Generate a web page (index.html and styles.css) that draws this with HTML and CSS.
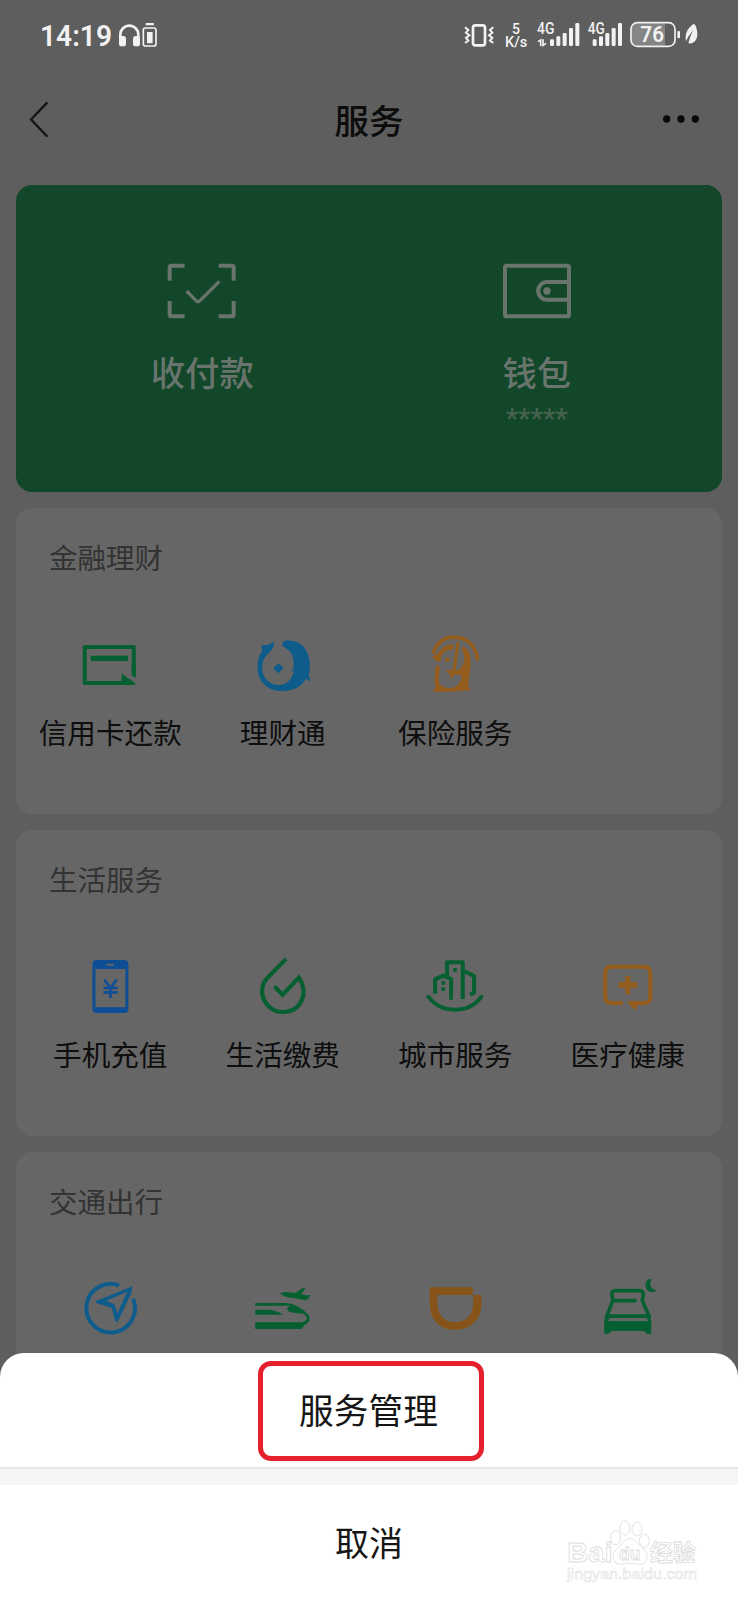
FILE: index.html
```html
<!DOCTYPE html>
<html lang="zh-CN">
<head>
<meta charset="utf-8">
<title>服务</title>
<link rel="stylesheet" href="styles.css">
</head>
<body>
<div class="phone">
  <div class="statusbar">
    <svg class="status-left" viewBox="0 0 540 210" width="180" height="70">
      <text class="clock" x="120" y="138" textLength="216" lengthAdjust="spacingAndGlyphs">14:19</text>
      <path d="M361 118V104a27 27 0 0 1 54 0V118" fill="none" stroke="#f2f2f2" stroke-width="8"/>
      <rect x="357" y="108" width="21" height="31" rx="8"/><rect x="399" y="108" width="21" height="31" rx="8"/>
      <rect x="437" y="69" width="25" height="7" rx="2"/>
      <rect x="430" y="84" width="38" height="54" rx="6" fill="none" stroke="#f2f2f2" stroke-width="5"/>
      <rect x="441" y="96" width="17" height="34" rx="1"/>
    </svg>
    <svg class="status-right" viewBox="0 0 894 210" width="298" height="70">
      <rect x="99" y="76" width="36" height="60" rx="7" fill="none" stroke="#f2f2f2" stroke-width="8"/>
      <path d="M75 82l10 8-7 8 10 8-10 8 7 8-10 7M160 82l-10 8 7 8-10 8 10 8-7 8 10 7" fill="none" stroke="#f2f2f2" stroke-width="6"/>
      <text x="216" y="101" font-size="45" font-weight="500" textLength="24" lengthAdjust="spacingAndGlyphs">5</text>
      <text x="195" y="140" font-size="46" font-weight="500" textLength="67" lengthAdjust="spacingAndGlyphs">K/s</text>
      <text x="291" y="103" font-size="48" font-weight="500" textLength="52" lengthAdjust="spacingAndGlyphs">4G</text>
      <path d="M294 125l8-5v18M309 118v18l9-6" fill="none" stroke="#f2f2f2" stroke-width="5"/>
      <rect x="330" y="118" width="12" height="20" rx="4"/><rect x="349" y="109" width="12" height="29" rx="4"/><rect x="368" y="99" width="12" height="39" rx="4"/><rect x="387" y="84" width="12" height="54" rx="4"/><rect x="406" y="69" width="12" height="69" rx="4"/>
      <text x="443" y="103" font-size="48" font-weight="500" textLength="51" lengthAdjust="spacingAndGlyphs">4G</text>
      <rect x="458" y="118" width="12" height="20" rx="4"/><rect x="477" y="109" width="12" height="29" rx="4"/><rect x="496" y="99" width="12" height="39" rx="4"/><rect x="515" y="84" width="12" height="54" rx="4"/><rect x="534" y="69" width="12" height="69" rx="4"/>
      <path d="M592 70H675V137H592a18 18 0 0 1-18-18V88a18 18 0 0 1 18-18z" fill="#858585"/>
      <rect x="573" y="68" width="132" height="71" rx="19" fill="none" stroke="#f2f2f2" stroke-width="5"/>
      <text x="601" y="126" font-size="64" font-weight="600" textLength="71" lengthAdjust="spacingAndGlyphs">76</text>
      <rect x="712" y="93" width="8" height="22" rx="3"/>
      <path d="M759 73C742 86 734 101 738 124Q744 108 760 90Q750 107 745 130C762 133 772 119 772 102Q771 83 764 73z"/>
    </svg>
  </div>

  <div class="navbar">
    <svg class="back" viewBox="0 0 60 110" width="20" height="37"><path d="M53 6L6 55L53 104" fill="none" stroke="#161616" stroke-width="7.5" stroke-linecap="round" stroke-linejoin="round"/></svg>
    <h1>服务</h1>
    <svg class="more" viewBox="0 0 108 24" width="36" height="8"><circle cx="11" cy="12" r="11"/><circle cx="54" cy="12" r="11"/><circle cx="97" cy="12" r="11"/></svg>
  </div>

  <div class="cards">
    <div class="pay">
      <div class="pay-item">
        <svg viewBox="112 70 210 168" width="70" height="56" fill="none" stroke="#69746d" stroke-width="12">
          <path d="M165 78H125Q120 78 120 83V123M267 78H307Q312 78 312 83V123M165 230H125Q120 230 120 225V184M267 230H307Q312 230 312 225V184"/>
          <path d="M171 154L199 183Q205 189 211 183L269 125" stroke-width="10"/>
        </svg>
        <div class="pay-name">收付款</div>
      </div>
      <div class="pay-item">
        <svg viewBox="183 70 210 168" width="70" height="56" fill="none" stroke="#69746d" stroke-width="12">
          <rect x="192" y="78" width="192" height="152" rx="5"/>
          <path d="M380 127H318a26.500 26.500 0 0 0 0 53H380"/><circle cx="318" cy="154" r="11" fill="#69746d" stroke="none"/>
        </svg>
        <div class="pay-name">钱包</div>
        <div class="pay-balance">*****</div>
      </div>
    </div>

    <section class="card">
      <h2>金融理财</h2>
      <div class="grid">
        <div class="cell">
          <svg class="icon green" viewBox="240.750 105 180 180">
            <path d="M402 227V141H255V249H366" fill="none" stroke="currentColor" stroke-width="12" stroke-linejoin="round"/>
            <path d="M273 167H385V183H273zM366 221L407 250Q406 255 400 255H364zM396 180H408V235L396 226z"/>
          </svg>
          <span>信用卡还款</span>
        </div>
        <div class="cell">
          <svg class="icon azure" viewBox="758.250 105 180 180">
            <path d="M821 124Q807 137 788 136L783 134Q785 145 785 154C771 172 769 209 776 229C789 263 818 275 853 273C884 271 905 258 916 237Q924 239 930 244Q930 233 925 225C931 203 931 181 920 156C906 127 881 119 855 122Q844 126 847 138C857 145 873 153 877 169Q882 184 880 201L874 215L881 212C879 233 862 252 839 255C809 257 787 235 786 207C785 181 795 168 807 158C819 147 821 139 821 124z"/>
            <path d="M834 190L850 205L834 220L819 205z"/>
          </svg>
          <span>理财通</span>
        </div>
        <div class="cell">
          <svg class="icon orange" viewBox="255.750 105 180 180">
            <path d="M281 156C297 121 323 109 345 112C383 111 408 139 413 177" fill="none" stroke="currentColor" stroke-width="11" stroke-linecap="round"/>
            <path d="M277 170Q288 163 296 158C307 142 323 132 341 133L340 149C324 145 309 158 304 171L302 186Q288 184 277 170zM371 139C386 148 393 164 393 183C392 211 386 235 386 258Q389 265 394 270Q340 276 280 276Q283 268 287 263L284 242L287 202Q294 190 300 199L297 244C302 262 321 266 337 263C351 261 358 252 364 239L365 223C356 227 347 225 344 223L335 237L329 221L317 212L333 211L344 205L342 211C355 215 371 200 374 181C375 163 369 155 365 146z"/>
            <path d="M355 125L343 210" stroke="currentColor" stroke-width="9"/><circle cx="323" cy="179" r="7"/>
          </svg>
          <span>保险服务</span>
        </div>
      </div>
    </section>

    <section class="card">
      <h2>生活服务</h2>
      <div class="grid">
        <div class="cell">
          <svg class="icon blue" viewBox="240.750 81 180 180">
            <path fill-rule="evenodd" d="M290 90H374Q386 90 386 102V238Q386 249 374 249H290Q278 249 278 238V102Q278 90 290 90zM287 117V232H377V117zM323 101a3 3 0 0 0 0 6h17a3 3 0 0 0 0-6z"/>
            <path d="M314 149L332 174L351 149M332 174V204M311 174H354M311 187H354" fill="none" stroke="currentColor" stroke-width="8"/>
          </svg>
          <span>手机充值</span>
        </div>
        <div class="cell">
          <svg class="icon green" viewBox="758.250 81 180 180">
            <path d="M853 91L802 143C765 181 794 246 849 246C900 246 928 192 896 143L847 194L827 174" fill="none" stroke="currentColor" stroke-width="12.500" stroke-linecap="square" stroke-linejoin="miter"/>
          </svg>
          <span>生活缴费</span>
        </div>
        <div class="cell">
          <svg class="icon green" viewBox="168.750 81 180 180">
            <path d="M179 200C217 252 301 252 338 200M235 145V97H282V207M247 209V147L223 137L199 148V191M286 123L316 138V188L304 194" fill="none" stroke="currentColor" stroke-width="12" stroke-linecap="butt" stroke-linejoin="round"/>
            <path d="M253 114H264V125H253zM218 153H229V164H218zM218 172H229V183H218z"/><circle cx="179" cy="200" r="6"/><circle cx="338" cy="200" r="6"/>
          </svg>
          <span>城市服务</span>
        </div>
        <div class="cell">
          <svg class="icon orange" viewBox="686.250 81 180 180">
            <path d="M761 219H727Q708 219 708 201V129Q708 110 727 110H824Q843 110 843 129V201Q843 219 824 219H785" fill="none" stroke="currentColor" stroke-width="12"/>
            <path d="M768 138H783V157H804V173H783V193H768V173H748V157H768zM774 213H809L801 240Q785 235 774 213z"/>
          </svg>
          <span>医疗健康</span>
        </div>
      </div>
    </section>

    <section class="card">
      <h2>交通出行</h2>
      <div class="grid">
        <div class="cell">
          <svg class="icon azure" viewBox="240.750 87 180 180">
            <path d="M358 106A73 73 0 1 0 400 146" fill="none" stroke="currentColor" stroke-width="12"/>
            <path fill-rule="evenodd" d="M398 109L395 128L354 215L346 214L336 174L289 159V153zM382 125L319 153L344 163L353 190z"/>
          </svg>
        </div>
        <div class="cell">
          <svg class="icon green" viewBox="758.250 87 180 180">
            <path fill-rule="evenodd" d="M765 159H857C885 161 911 178 926 197Q934 216 913 225L904 237H765V217H902Q920 214 920 203L911 191Q888 191 867 185L860 178Q861 171 869 167H765zM765 179H808Q835 183 848 194H765z"/>
            <path d="M840 131L850 126L865 127L885 129L907 114L916 115L903 133L922 136L931 135Q924 149 915 151L880 144Q853 141 840 131z"/>
          </svg>
        </div>
        <div class="cell">
          <svg class="icon orange deep" viewBox="168.750 87 180 180">
            <path d="M183 112H312V135H206V161C206 193 227 217 258 217C291 217 313 194 313 161V135H338V161C338 209 306 239 258 239C211 239 183 207 183 161z"/>
          </svg>
        </div>
        <div class="cell">
          <svg class="icon green" viewBox="686.250 87 180 180">
            <path d="M710 205L731 151L728 137Q726 122 739 122H811Q823 122 822 137L819 151L842 205M730 152H802" fill="none" stroke="currentColor" stroke-width="11" stroke-linejoin="round"/>
            <path fill-rule="evenodd" d="M715 193H837L846 211V252H834L824 243H726L717 252H705V211zM722 204L715 213H838L832 204zM847 84C824 88 823 117 841 125Q857 128 864 120C846 121 838 106 847 84z"/>
          </svg>
        </div>
      </div>
    </section>
  </div>

  <div class="sheet">
    <div class="action"><span class="highlight">服务管理</span></div>
    <div class="gap"></div>
    <div class="action cancel">取消</div>
    <svg class="watermark" viewBox="0 0 420 204" width="140" height="68">
      <g fill="#fff" stroke="#dcdcdc" stroke-width="2.500">
        <text class="brand" x="4" y="130" font-size="85" textLength="136" lengthAdjust="spacingAndGlyphs">Bai</text>
        <path d="M192 59C208 59 215 75 229 86C244 98 249 119 236 131C223 142 212 132 192 133C172 132 161 141 149 131C136 119 140 99 155 87C169 75 176 59 192 59z"/>
        <ellipse cx="149" cy="56" rx="15" ry="21"/><ellipse cx="177" cy="27" rx="15" ry="21"/><ellipse cx="213" cy="30" rx="15" ry="21"/><ellipse cx="235" cy="65" rx="15" ry="20"/>
        <text class="brand" x="159" y="122" font-size="54" textLength="64" lengthAdjust="spacingAndGlyphs">du</text>
        <text class="brand" x="252" y="126" font-size="68" textLength="137" lengthAdjust="spacingAndGlyphs">经验</text>
        <text class="brand thin" x="3" y="181" font-size="46" textLength="390" lengthAdjust="spacingAndGlyphs">jingyan.baidu.com</text>
      </g>
    </svg>
  </div>
</div>
</body>
</html>
```

FILE: styles.css
```css
* {
  box-sizing: border-box;
}

body {
  margin: 0;
  font-family: "Noto Sans CJK SC", sans-serif;
}

h1,
h2 {
  margin: 0;
}

.phone {
  position: relative;
  width: 738px;
  height: 1600px;
  overflow: hidden;
  background: #5e5e5e;
}

.statusbar {
  display: flex;
  justify-content: space-between;
  height: 70px;
  fill: #f2f2f2;
  font-family: Roboto, sans-serif;
}

.clock {
  font-size: 89px;
  font-weight: 600;
}

.navbar {
  display: flex;
  align-items: center;
  justify-content: space-between;
  height: 98px;
  padding: 0 39px 0 29px;
}

.navbar h1 {
  padding-left: 26px;
  font-size: 34.5px;
  font-weight: 500;
  line-height: 48px;
  color: #0c0c0c;
}

.more {
  fill: #080808;
}

.cards {
  display: flex;
  flex-direction: column;
  gap: 16px;
  padding: 17px 16px 0;
}

.pay {
  display: flex;
  height: 307px;
  padding: 78px 18px 0 19px;
  border-radius: 16px;
  background: #12472a;
  color: #69746d;
}

.pay-item {
  display: flex;
  flex: 1;
  flex-direction: column;
  align-items: center;
}

.pay-name {
  margin-top: 27px;
  font-size: 34.3px;
  font-weight: 500;
  line-height: 50px;
}

.pay-balance {
  margin-top: 8px;
  font-family: Roboto, sans-serif;
  font-size: 28px;
  font-weight: 500;
  line-height: 30px;
  color: #47634f;
}

.card {
  height: 306px;
  padding: 29px 8px 0;
  border-radius: 16px;
  background: #666;
}

.card h2 {
  padding-left: 25px;
  font-size: 28.5px;
  font-weight: 400;
  line-height: 40px;
  color: #333;
}

.grid {
  display: grid;
  grid-template-columns: repeat(4, 1fr);
  margin-top: 58px;
}

.cell {
  display: flex;
  flex-direction: column;
  align-items: center;
  font-size: 28.6px;
  line-height: 40px;
  color: #0e0e0e;
  white-space: nowrap;
}

.cell span {
  margin-top: 17px;
}

.icon {
  width: 60px;
  height: 60px;
  fill: currentColor;
}

.green {
  color: #065f31;
}

.azure {
  color: #0e5c8c;
}

.blue {
  color: #0e4e94;
}

.orange {
  color: #935c1c;
}

.deep {
  color: #865418;
}

.sheet {
  position: absolute;
  right: 0;
  bottom: 0;
  left: 0;
  height: 247px;
  border-radius: 24px 24px 0 0;
  background: #fff;
}

.action {
  display: flex;
  justify-content: center;
  height: 114px;
  padding: 8px 0 0 3px;
  font-size: 34.7px;
  color: #161616;
}

.highlight {
  width: 226px;
  height: 100px;
  border: 5px solid #e4202c;
  border-radius: 13px;
  line-height: 86px;
  text-align: center;
  padding-right: 4px;
}

.gap {
  height: 18px;
  border-top: 2px solid #e6e6e6;
  background: #f6f6f6;
}

.cancel {
  height: 115px;
  padding: 0;
  font-size: 34px;
  line-height: 113px;
}

.watermark {
  position: absolute;
  right: 32px;
  bottom: 13px;
}

.brand {
  font-family: "Liberation Sans", "Noto Sans CJK SC", sans-serif;
  font-weight: 700;
}

.thin {
  font-weight: 400;
  stroke-width: 1.5px;
}
```
